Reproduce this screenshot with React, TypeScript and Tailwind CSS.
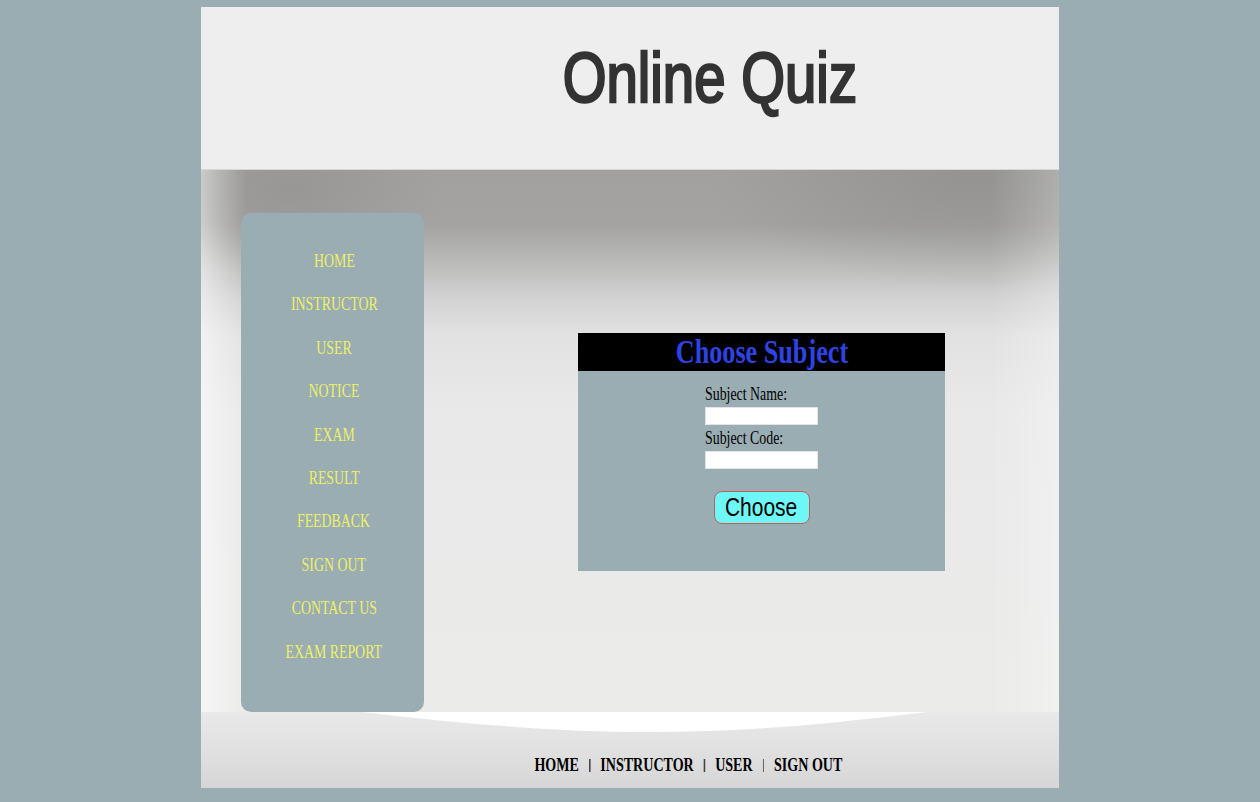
import React from "react";

const menu = [
  "HOME",
  "INSTRUCTOR",
  "USER",
  "NOTICE",
  "EXAM",
  "RESULT",
  "FEEDBACK",
  "SIGN OUT",
  "CONTACT US",
  "EXAM REPORT",
];

const footerLinks = ["HOME", "INSTRUCTOR", "USER", "SIGN OUT"];

const App: React.FC = () => {
  return (
    <div className="min-h-[802px] w-full bg-[#9aadb3] pt-[7px] pb-[14px]">
      <div className="mx-auto w-[858px] flex flex-col">
        {/* Header */}
        <div className="h-[163px] bg-[#eeeeee] border-b border-[#d6d6d6] flex justify-center pl-[160px] pt-[36px]">
          <span className="inline-block h-[70px] text-[70px] leading-[70px] text-[#333333] [-webkit-text-stroke:2.6px_#333333] font-['Liberation_Sans',Arial,sans-serif] scale-x-[0.805] origin-center whitespace-nowrap">
            Online Quiz
          </span>
        </div>

        {/* Main area */}
        <div className="h-[542px] flex bg-[radial-gradient(ellipse_150px_90px_at_90px_20px,rgba(125,125,125,0.3),transparent),radial-gradient(ellipse_260px_110px_at_770px_10px,rgba(115,115,115,0.3),transparent),linear-gradient(90deg,rgba(255,255,255,0.55)_0px,rgba(255,255,255,0)_45px,rgba(255,255,255,0)_790px,rgba(255,255,255,0.3)_858px),linear-gradient(180deg,#a2a19f_0px,#a4a3a1_55px,#b9b9b8_90px,#d3d3d3_130px,#e2e2e2_165px,#e9e9e9_240px,#ebebea_542px)]">
          {/* Sidebar */}
          <nav className="ml-[40px] mt-[43px] w-[183px] h-[499px] rounded-[10px] bg-[#9aadb3] pt-[27px] pl-[3px] flex flex-col items-center">
            {menu.map((item) => (
              <a
                key={item}
                href="#"
                className="block h-[43.4px] leading-[43.4px] text-[18px] text-[#eef067] font-['Liberation_Serif','Times_New_Roman',serif] whitespace-nowrap"
              >
                <span className="inline-block scale-x-[0.77] origin-center">
                  {item}
                </span>
              </a>
            ))}
          </nav>

          {/* Form box */}
          <div className="ml-[154px] mt-[163px] w-[367px] h-[238px] bg-[#9aadb3] flex flex-col">
            <div className="h-[38px] bg-black flex items-center justify-center">
              <span className="inline-block text-[34px] leading-[38px] font-bold text-[#2f43e4] font-['Liberation_Serif','Times_New_Roman',serif] scale-x-[0.77] origin-center whitespace-nowrap">
                Choose Subject
              </span>
            </div>
            <div className="flex flex-col items-center pt-[10px]">
              <div className="w-[113px] flex flex-col font-['Liberation_Serif','Times_New_Roman',serif] text-black">
                <label className="h-[26px] leading-[26px] text-[18px] whitespace-nowrap">
                  <span className="inline-block scale-x-[0.77] origin-left">
                    Subject Name:
                  </span>
                </label>
                <input
                  type="text"
                  className="h-[18px] w-[113px] bg-white border border-[#e4e4e4] outline-none"
                />
                <label className="h-[26px] leading-[26px] text-[18px] whitespace-nowrap">
                  <span className="inline-block scale-x-[0.77] origin-left">
                    Subject Code:
                  </span>
                </label>
                <input
                  type="text"
                  className="h-[18px] w-[113px] bg-white border border-[#e4e4e4] outline-none"
                />
              </div>
              <button className="mt-[22px] w-[96px] h-[33px] rounded-[8px] bg-[#6ef7f7] border border-[#c85a5a] flex items-center justify-center">
                <span className="inline-block text-[25px] leading-[33px] text-black font-['Liberation_Sans',Arial,sans-serif] scale-x-[0.84] origin-center">
                  Choose
                </span>
              </button>
            </div>
          </div>
        </div>

        {/* Footer */}
        <div className="relative h-[76px] bg-[linear-gradient(180deg,#e9e9e9_0px,#e0e0e0_40px,#d6d6d6_76px)] flex justify-center pl-[116px] pt-[41px]">
          <svg
            className="absolute left-0 top-0"
            width="858"
            height="24"
            viewBox="0 0 858 24"
          >
            <path
              d="M161 0 L726 0 C620 13 540 20 447 20 C360 20 260 12 161 0 Z"
              fill="#ffffff"
            />
          </svg>
          <div className="inline-flex items-center gap-[13px] h-[24px] scale-x-[0.78] origin-center font-['Liberation_Serif','Times_New_Roman',serif] text-[18px] leading-[24px] whitespace-nowrap">
            {footerLinks.map((link, i) => (
              <React.Fragment key={link}>
                {i > 0 && (
                  <span className="inline-block w-[1.5px] h-[13px] bg-[#444444]" />
                )}
                <a href="#" className="font-bold text-black">
                  {link}
                </a>
              </React.Fragment>
            ))}
          </div>
        </div>
      </div>
    </div>
  );
};

export default App;
